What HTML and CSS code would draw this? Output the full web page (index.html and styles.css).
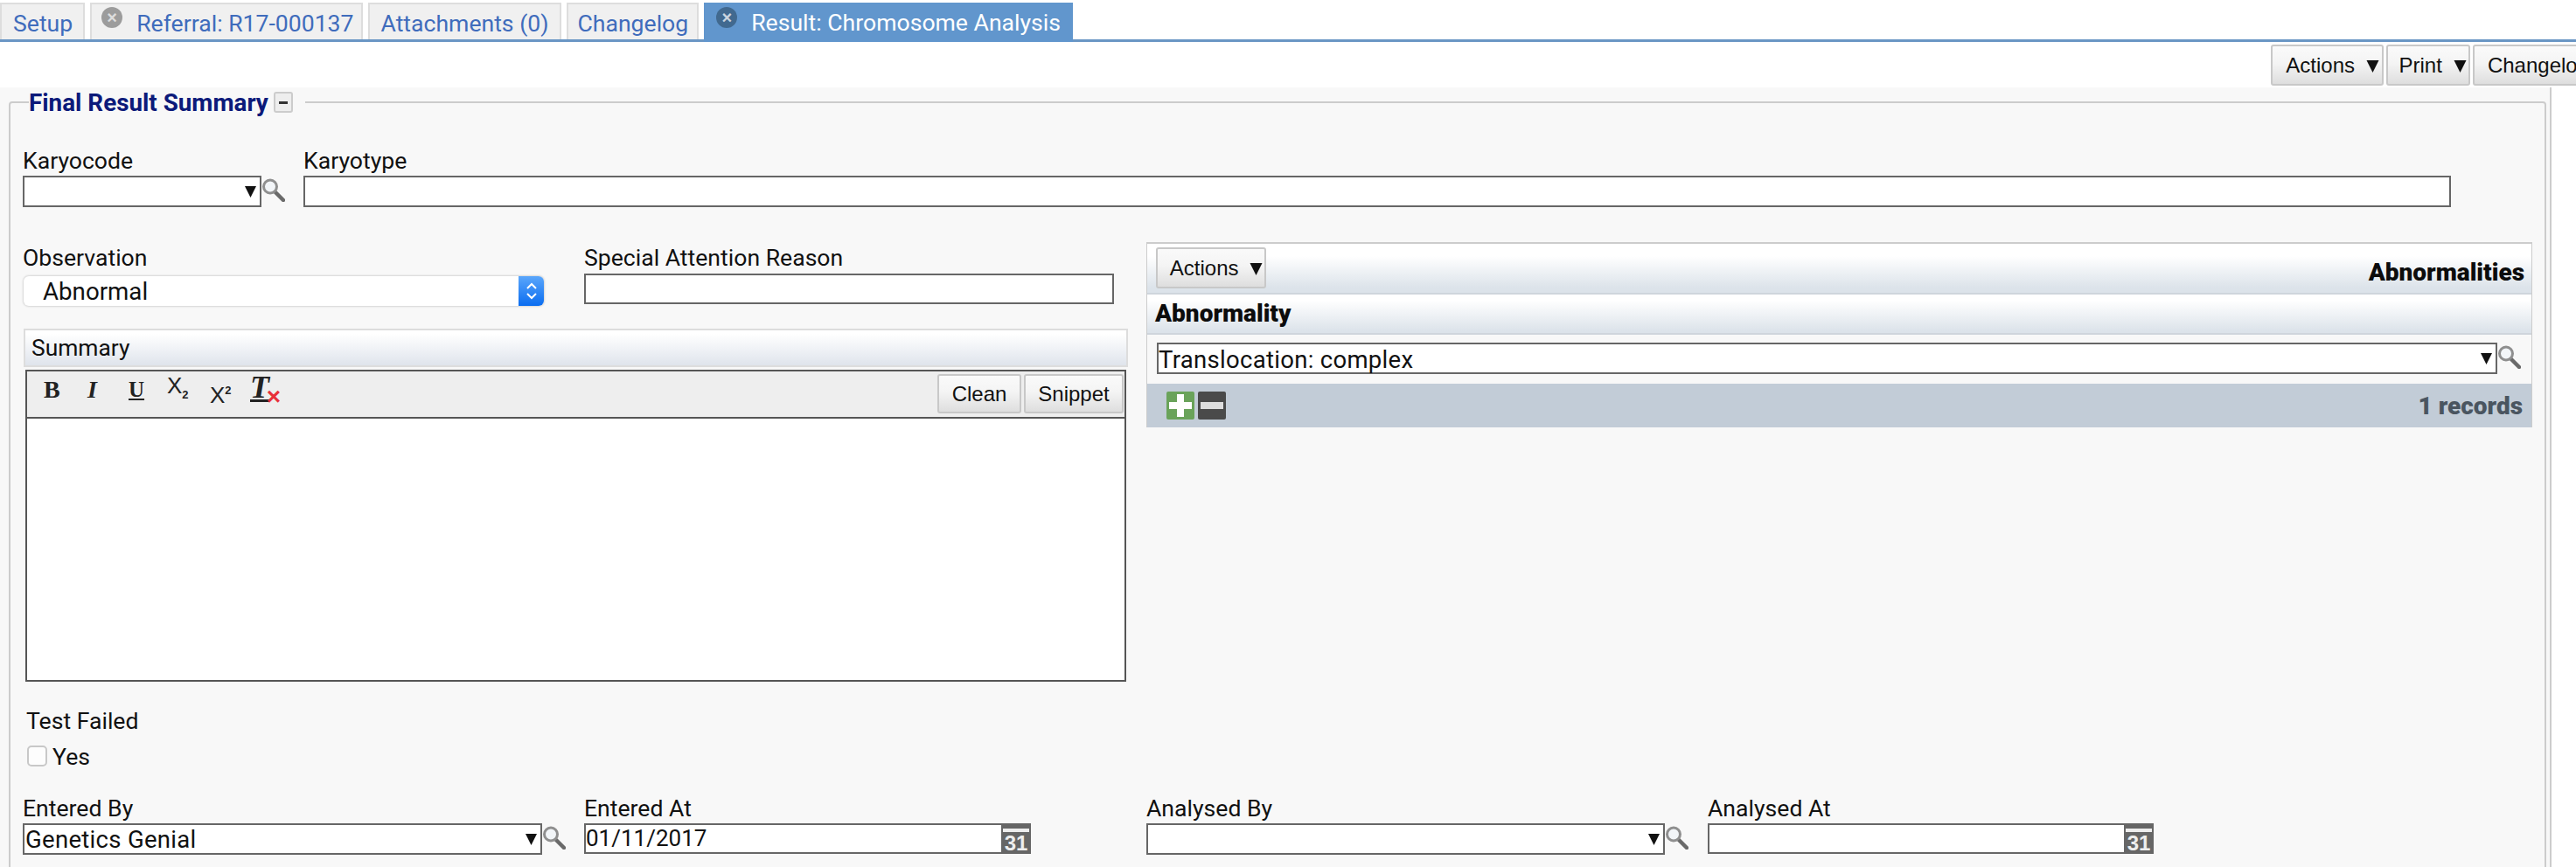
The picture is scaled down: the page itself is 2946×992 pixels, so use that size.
FILE: index.html
```html
<!DOCTYPE html>
<html lang="en">
<head>
<meta charset="utf-8">
<title>Result: Chromosome Analysis</title>
<link rel="stylesheet" href="styles.css">
</head>
<body>
<svg class="sprite" width="0" height="0" aria-hidden="true">
  <defs>
    <symbol id="i-arrow" viewBox="0 0 14 14"><polygon points="0,0 14,0 7,14" fill="#111"/></symbol>
    <symbol id="i-search" viewBox="0 0 27 27">
      <line x1="15" y1="15" x2="25" y2="25" stroke="#6a6a6a" stroke-width="4.5" stroke-linecap="round"/>
      <circle cx="10" cy="9.5" r="7.5" fill="#f2f5f8" stroke="#8f8f8f" stroke-width="3"/>
    </symbol>
  </defs>
</svg>

<nav class="tabbar">
  <a class="tab tab-plain">Setup</a>
  <a class="tab tab-close"><span class="close">×</span>Referral: R17-000137</a>
  <a class="tab tab-plain">Attachments (0)</a>
  <a class="tab tab-plain tab-log">Changelog</a>
  <a class="tab tab-close tab-active"><span class="close">×</span>Result: Chromosome Analysis</a>
</nav>

<div class="toolbar">
  <button class="btn btn-actions">Actions <svg class="arrow-btn"><use href="#i-arrow"/></svg></button>
  <button class="btn btn-print">Print <svg class="arrow-btn"><use href="#i-arrow"/></svg></button>
  <button class="btn btn-changelog">Changelog</button>
</div>

<main class="page">
  <fieldset class="group">
    <legend class="group-title">Final Result Summary <span class="toggle"><span class="toggle-bar"></span></span></legend>

    <div class="row-top">
      <div class="field field-karyocode">
        <div class="label">Karyocode</div>
        <div class="combo-wrap">
          <div class="combo"><svg class="arrow"><use href="#i-arrow"/></svg></div>
          <svg class="search"><use href="#i-search"/></svg>
        </div>
      </div>
      <div class="field field-karyotype">
        <div class="label">Karyotype</div>
        <div class="text-input"></div>
      </div>
    </div>

    <div class="row-main">
      <div class="col-left">
        <div class="row-observation">
          <div class="field">
            <div class="label">Observation</div>
            <div class="native-select">
              <span>Abnormal</span>
              <span class="stepper">
                <svg viewBox="0 0 14 24" width="14" height="24"><polyline points="2,9 7,4 12,9" fill="none" stroke="#fff" stroke-width="2"/><polyline points="2,15 7,20 12,15" fill="none" stroke="#fff" stroke-width="2"/></svg>
              </span>
            </div>
          </div>
          <div class="field field-special">
            <div class="label">Special Attention Reason</div>
            <div class="text-input text-special"></div>
          </div>
        </div>

        <div class="summary-head">Summary</div>
        <div class="editor">
          <div class="editor-tools">
            <div class="format-icons">
              <span class="fi fi-b">B</span>
              <span class="fi fi-i">I</span>
              <span class="fi fi-u">U</span>
              <span class="fi fi-x fi-sub">X<sub>2</sub></span>
              <span class="fi fi-x fi-sup">X<sup>2</sup></span>
              <span class="fi fi-t">T<span class="fi-cross">×</span></span>
            </div>
            <div class="editor-btns">
              <button class="btn btn-clean">Clean</button>
              <button class="btn btn-snippet">Snippet</button>
            </div>
          </div>
          <div class="editor-body"></div>
        </div>

        <div class="label label-test">Test Failed</div>
        <label class="check-row"><span class="checkbox"></span>Yes</label>
      </div>

      <section class="abn-panel">
        <div class="abn-head">
          <button class="btn btn-abn">Actions <svg class="arrow-btn"><use href="#i-arrow"/></svg></button>
          <div class="abn-title">Abnormalities</div>
        </div>
        <div class="abn-col">Abnormality</div>
        <div class="abn-row">
          <div class="combo combo-abn">Translocation: complex<svg class="arrow"><use href="#i-arrow"/></svg></div>
          <svg class="search"><use href="#i-search"/></svg>
        </div>
        <div class="abn-foot">
          <div class="abn-icons">
            <span class="sq sq-plus"></span>
            <span class="sq sq-minus"></span>
          </div>
          <div class="abn-count">1 records</div>
        </div>
      </section>
    </div>

    <div class="row-bottom">
      <div class="field">
        <div class="label">Entered By</div>
        <div class="combo-wrap">
          <div class="combo combo-entered">Genetics Genial<svg class="arrow"><use href="#i-arrow"/></svg></div>
          <svg class="search"><use href="#i-search"/></svg>
        </div>
      </div>
      <div class="field">
        <div class="label">Entered At</div>
        <div class="date date-entered"><span class="date-value">01/11/2017</span><span class="cal">31</span></div>
      </div>
      <div class="field">
        <div class="label">Analysed By</div>
        <div class="combo-wrap">
          <div class="combo combo-analysed"><svg class="arrow"><use href="#i-arrow"/></svg></div>
          <svg class="search"><use href="#i-search"/></svg>
        </div>
      </div>
      <div class="field">
        <div class="label">Analysed At</div>
        <div class="date date-analysed"><span class="date-value"></span><span class="cal">31</span></div>
      </div>
    </div>
  </fieldset>
</main>
</body>
</html>
```
FILE: styles.css
```css
* { box-sizing: border-box; }
html, body { margin: 0; padding: 0; }
body {
  width: 2946px;
  height: 992px;
  overflow: hidden;
  background: #fff;
  font-family: Roboto, "Liberation Sans", sans-serif;
  font-size: 26.6px;
  color: #111;
}
.sprite { position: absolute; }

/* Tabs */
.tabbar {
  display: flex;
  gap: 6px;
  height: 48px;
  padding-top: 3px;
  border-bottom: 3px solid #6a96c4;
}
.tab {
  display: flex;
  align-items: center;
  height: 42px;
  padding: 2px 12px 0 13px;
  background: #f0f0f0;
  border: 2px solid #ddd;
  border-bottom: 0;
  color: #3f6cbc;
  font-size: 26.6px;
  white-space: nowrap;
}
.tab-close { padding-left: 11px; padding-right: 8px; }
.tab-log { padding-left: 11px; padding-right: 10px; }
.close {
  width: 24px;
  height: 24px;
  margin: -12px 16px 0 0;
  border-radius: 50%;
  background: #9c9c9c;
  color: #ddd;
  font: bold 20px/24px "Liberation Sans", sans-serif;
  text-align: center;
}
.tab-active {
  height: 45px;
  padding: 0 14px;
  background: #6196cd;
  border: 0;
  color: #fff;
}
.tab-active .close { background: #41698f; color: #c9d4df; }

/* Buttons */
.btn {
  height: 47px;
  padding: 0;
  border: 2px solid #c8c8c8;
  border-radius: 3px;
  background: linear-gradient(#fafafa 0%, #f4f4f4 45%, #dedede 100%);
  font: 24px "Liberation Sans", sans-serif;
  color: #111;
  white-space: nowrap;
}
.arrow-btn { width: 15px; height: 14px; margin-left: 6px; }

.toolbar {
  display: flex;
  justify-content: flex-end;
  gap: 3px;
  height: 52px;
  padding-top: 3px;
  margin-right: -32px;
}
.btn-actions { width: 129px; padding-left: 12px; }
.btn-print { width: 96px; padding-left: 10px; }
.btn-changelog { width: 150px; }

/* Page and fieldset */
.page {
  width: 2918px;
  height: 892px;
  padding: 2px 4px 0 10px;
  background: #f8f8f8;
  border-right: 2px solid #ccc;
  overflow: hidden;
}
.group {
  margin: 0;
  padding: 38px 0 0 14px;
  min-width: 0;
  height: 1000px;
  border: 2px solid #ccc;
  border-radius: 4px;
}
.group-title {
  display: flex;
  align-items: center;
  height: 30px;
  margin-left: 7px;
  padding: 0 14px 0 0;
  color: #0c1a7a;
  font-weight: 700;
  font-size: 27.8px;
  white-space: nowrap;
}
.toggle {
  display: flex;
  align-items: center;
  justify-content: center;
  width: 22px;
  height: 24px;
  margin-left: 6px;
  background: #eee;
  border: 2px solid #ccc;
  border-radius: 3px;
}
.toggle-bar { width: 10px; height: 3px; background: #333; }

/* Fields */
.label { height: 30px; line-height: 28px; font-size: 26.6px; white-space: nowrap; }
.row-bottom .label { line-height: 30px; }
.field-karyocode { width: 321px; }
.field-karyotype { flex: none; }
.row-top { display: flex; }
.combo-wrap { display: flex; margin-top: 1px; }
.combo {
  position: relative;
  display: flex;
  align-items: center;
  height: 36px;
  padding: 1px 0 0 1px;
  background: #fff;
  border: 2px solid #666;
  font-size: 27.5px;
  letter-spacing: .3px;
  white-space: nowrap;
}
.arrow {
  position: absolute;
  right: 4px;
  top: 10px;
  width: 13px;
  height: 13px;
}
.search { width: 27px; height: 27px; margin-top: 3px; flex: none; }
.field-karyocode .combo { width: 273px; }
.text-input { height: 36px; margin-top: 1px; background: #fff; border: 2px solid #666; }
.field-karyotype .text-input { width: 2456px; }

.row-main {
  display: grid;
  grid-template-columns: 1285px 1585px;
  margin-top: 40px;
}
.col-left { padding-top: 4px; }
.row-observation { display: flex; }
.row-observation .field:first-child { width: 642px; }
.native-select {
  display: flex;
  align-items: center;
  justify-content: space-between;
  width: 595px;
  height: 34px;
  margin: 5px 0 0 1px;
  padding-left: 22px;
  background: #fff;
  border-radius: 6px;
  box-shadow: 0 0 2px 1px #d6d6d6;
  font-size: 27.7px;
  overflow: hidden;
}
.stepper {
  display: flex;
  align-items: center;
  justify-content: center;
  width: 29px;
  height: 34px;
  background: linear-gradient(#5aa6fb, #0b6df0);
}
.text-special { width: 606px; height: 35px; margin-top: 2px; }

.summary-head {
  width: 1263px;
  height: 44px;
  margin: 26px 0 0 1px;
  padding-left: 7px;
  line-height: 41px;
  background: linear-gradient(#fff 10%, #dfe4ec 100%);
  border: 2px solid #ddd;
  font-size: 26.4px;
}
.editor {
  width: 1259px;
  height: 357px;
  margin: 3px 0 0 3px;
  background: #fff;
  border: 2px solid #555;
  display: flex;
  flex-direction: column;
}
.editor-tools {
  display: flex;
  justify-content: space-between;
  height: 54px;
  background: #eee;
  border-bottom: 2px solid #555;
}
.format-icons {
  display: flex;
  align-items: flex-start;
  padding: 6px 0 0 19px;
}
.fi {
  display: block;
  color: #222;
  font-family: "Liberation Serif", serif;
  line-height: 30px;
}
.fi-b { width: 50px; font-size: 28px; font-weight: 700; }
.fi-i { width: 47px; font-size: 28px; font-style: italic; font-weight: 700; }
.fi-u { width: 44px; font-size: 25px; font-weight: 700; text-decoration: underline; }
.fi-x { font-family: "Liberation Sans", sans-serif; font-size: 26px; }
.fi-x sub, .fi-x sup { font-size: 13px; font-weight: 700; }
.fi-sub { width: 49px; margin-top: -5px; }
.fi-sup { width: 46px; margin-top: 1px; }
.fi-t {
  position: relative;
  width: 34px;
  margin-top: -3px;
  font-size: 36px;
  font-style: italic;
  font-weight: 700;
  text-decoration: underline;
}
.fi-cross {
  position: absolute;
  right: -1px;
  bottom: -7px;
  color: #e8303a;
  font: bold 28px/22px "Liberation Sans", sans-serif;
}
.editor-btns { display: flex; gap: 3px; padding: 3px 1px 0 0; }
.btn-clean { width: 96px; height: 45px; }
.btn-snippet { width: 114px; height: 45px; }
.editor-body { flex: 1; }

.label-test { margin: 31px 0 0 4px; }
.check-row {
  display: flex;
  align-items: center;
  height: 30px;
  margin: 9px 0 0 5px;
  font-size: 26.6px;
}
.checkbox {
  width: 23px;
  height: 24px;
  margin-right: 6px;
  background: #fdfdfd;
  border: 2px solid #c8c8c8;
  border-radius: 5px;
}

/* Abnormalities panel */
.abn-panel {
  height: 212px;
  border: 1px solid #ccc;
  border-top-width: 2px;
  border-bottom: 0;
}
.abn-head {
  display: flex;
  align-items: flex-start;
  justify-content: space-between;
  height: 58px;
  padding: 4px 8px 0 10px;
  background: linear-gradient(#fff 25%, #dce3ea 90%);
  border-bottom: 2px solid #cfd5dc;
}
.btn-abn { width: 126px; padding-left: 12px; }
.abn-title { padding-top: 12px; font-size: 28px; font-weight: 900; color: #0c0c0c; }
.abn-col {
  height: 46px;
  padding-left: 9px;
  line-height: 44px;
  background: linear-gradient(#fff 15%, #dce3ea 95%);
  border-bottom: 2px solid #cfd5dc;
  font-size: 28px;
  font-weight: 900;
  color: #0c0c0c;
}
.abn-row { display: flex; height: 56px; padding: 9px 0 0 11px; background: #f8f8f8; }
.combo-abn { width: 1533px; padding: 3px 0 0 0; }
.abn-foot {
  display: flex;
  align-items: center;
  justify-content: space-between;
  height: 50px;
  padding: 0 10px 0 22px;
  background: #c2ccd7;
}
.abn-icons { display: flex; gap: 4px; }
.sq { position: relative; display: block; width: 32px; height: 32px; border-radius: 2px; }
.sq-plus { background: #6aa35a; }
.sq-minus { background: #4a4a4a; }
.sq-plus::before, .sq-minus::before {
  content: "";
  position: absolute;
  left: 3px;
  right: 3px;
  top: 12px;
  height: 8px;
  background: #fff;
}
.sq-minus::before { background: #ddd; }
.sq-plus::after {
  content: "";
  position: absolute;
  top: 3px;
  bottom: 3px;
  left: 12px;
  width: 8px;
  background: #fff;
}
.abn-count { font-size: 28px; font-weight: 900; color: #4a5560; }

/* Bottom row */
.row-bottom {
  display: grid;
  grid-template-columns: 642px 643px 642px auto;
  margin-top: 30px;
}
.combo-entered { width: 594px; }
.combo-analysed { width: 593px; }
.row-bottom .combo-wrap { margin-top: 2px; }
.date {
  display: flex;
  justify-content: space-between;
  height: 35px;
  margin-top: 2px;
  background: #fff;
  border: 2px solid #666;
  border-right: 0;
}
.date-entered { width: 511px; }
.date-analysed { width: 510px; }
.date-value { padding-left: 0; font-size: 26px; line-height: 31px; }
.cal {
  position: relative;
  width: 34px;
  margin-top: -2px;
  margin-bottom: -2px;
  padding-top: 11px;
  background: #666;
  color: #eee;
  font: bold 24px/23px "Liberation Sans", sans-serif;
  text-align: center;
}
.cal::before {
  content: "";
  position: absolute;
  left: 2px;
  right: 2px;
  top: 6px;
  height: 4px;
  background: #eee;
}
```
